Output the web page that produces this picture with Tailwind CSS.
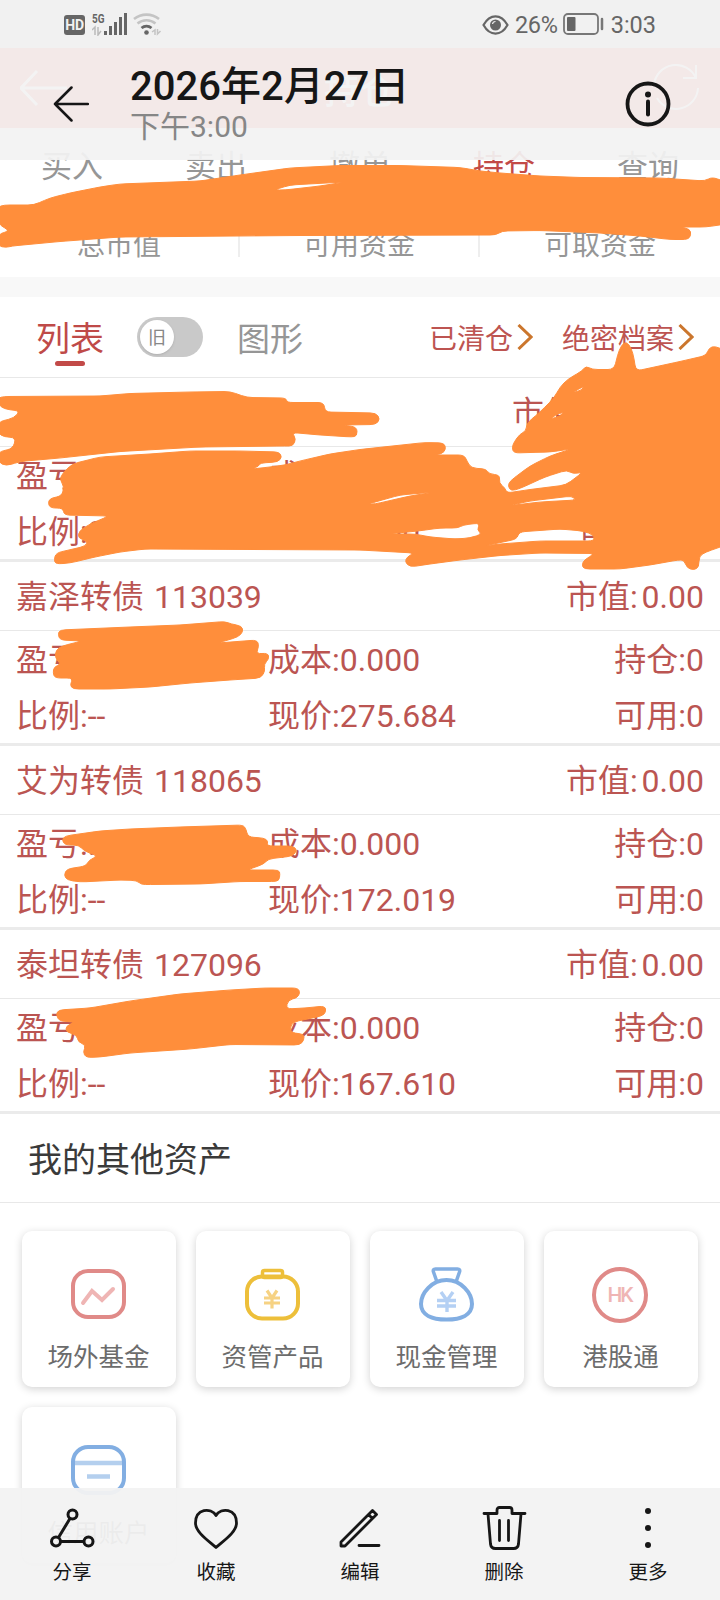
<!DOCTYPE html>
<html lang="zh-CN">
    <head>
        <meta charset="UTF-8" />
        <meta name="viewport" content="width=device-width, initial-scale=1.0" />
        <script src="https://cdn.jsdelivr.net/npm/@tailwindcss/browser@4"></script>
        <title>持仓</title>
    </head>
    <body
        class="relative h-[1600px] w-[720px] overflow-hidden bg-white font-[Roboto,'Noto_Sans_CJK_SC',sans-serif] leading-none"
    >
        <!-- trading app -->
        <main class="flex h-full flex-col">
            <div class="h-12 shrink-0 bg-[#e4e4e4]"></div>
            <div
                class="flex h-20 shrink-0 items-center justify-between bg-[#ff6c60] pl-5 pr-5 text-white"
            >
                <svg class="h-10 w-12" viewBox="0 0 48 40" fill="none" stroke="currentColor" stroke-width="3">
                    <path d="M17 3 1 20l16 17M1 20h46" />
                </svg>
                <span class="pt-2 text-[36px] font-medium">持仓</span>
                <svg class="h-12 w-12" viewBox="0 0 48 48" fill="none" stroke="currentColor" stroke-width="2">
                    <path d="M2 21A22 22 0 0 1 44 14M46 24A22 22 0 0 1 5 34M44 1v13H31" />
                </svg>
            </div>

            <nav
                class="grid h-[74px] shrink-0 grid-cols-5 items-center pt-[3px] text-center text-[31px] text-[#969696]"
            >
                <span>买入</span>
                <span>卖出</span>
                <span>撤单</span>
                <span class="text-[#c24a47]">持仓</span>
                <span>查询</span>
            </nav>

            <div
                class="grid h-[75px] shrink-0 grid-cols-3 items-end pb-[20px] text-center text-[28px] leading-[22px] text-[#969696]"
            >
                <span class="border-r-2 border-[#eee]">总市值</span>
                <span class="border-r-2 border-[#eee]">可用资金</span>
                <span>可取资金</span>
            </div>
            <div class="h-5 shrink-0 bg-[#f8f8f8]"></div>

            <div
                class="flex h-[81px] shrink-0 items-center border-b border-[#e8e8e8] pl-9 pr-[26px] text-[#bd5451]"
            >
                <div class="relative pt-1 text-[34px] text-[#bf4a48]">
                    列表
                    <i class="absolute -bottom-[10px] left-[19px] h-[5px] w-[30px] rounded-full bg-[#c24a48]"></i>
                </div>
                <div class="ml-[33px] flex h-10 w-[66px] items-center rounded-full bg-[#c9c9c9] pl-[3px]">
                    <span
                        class="flex size-[34px] items-center justify-center rounded-full bg-white pt-0.5 text-[18px] text-[#888] shadow"
                        >旧</span
                    >
                </div>
                <span class="ml-[34px] pt-1 text-[33px] text-[#969696]">图形</span>
                <div class="ml-auto flex items-center text-[28px]">
                    <span class="pt-[5px]">已清仓</span>
                    <svg class="ml-1 h-[26px] w-4" viewBox="0 0 16 26" fill="none" stroke="#cb762d" stroke-width="3">
                        <path d="m1.500 1 12.500 12-12.500 12" />
                    </svg>
                </div>
                <div class="ml-[29px] flex items-center text-[28px]">
                    <span class="pt-[5px]">绝密档案</span>
                    <svg class="ml-1 h-[26px] w-4" viewBox="0 0 16 26" fill="none" stroke="#cb762d" stroke-width="3">
                        <path d="m1.500 1 12.500 12-12.500 12" />
                    </svg>
                </div>
            </div>

            <!-- positions -->
            <section class="shrink-0 text-[32px] text-[#bb5552]">
                <article class="h-[184px] border-b-[3px] border-[#ebebeb]">
                    <header class="flex h-[69px] items-center border-b border-[#e8e8e8] px-4 pt-0.5">
                        <span class="ml-auto [word-spacing:-4px]">市值: 0000.00</span>
                    </header>
                    <div class="grid h-[113px] grid-cols-[252px_1fr_auto] items-center px-4 pt-px">
                        <span>盈亏:</span><span>成本:0.000</span><span class="text-right">持仓:000</span>
                        <span>比例:3</span><span>现价:0.000</span><span class="text-right">可用:000</span>
                    </div>
                </article>
                <article class="h-[184px] border-b-[3px] border-[#ebebeb]">
                    <header class="flex h-[69px] items-center justify-between border-b border-[#e8e8e8] px-4 pt-0.5">
                        <span class="[word-spacing:2px]">嘉泽转债 113039</span>
                        <span class="[word-spacing:-4px]">市值: 0.00</span>
                    </header>
                    <div class="grid h-[113px] grid-cols-[252px_1fr_auto] items-center px-4 pt-px">
                        <span>盈亏:</span><span>成本:0.000</span><span class="text-right">持仓:0</span>
                        <span>比例:--</span><span>现价:275.684</span><span class="text-right">可用:0</span>
                    </div>
                </article>
                <article class="h-[184px] border-b-[3px] border-[#ebebeb]">
                    <header class="flex h-[69px] items-center justify-between border-b border-[#e8e8e8] px-4 pt-0.5">
                        <span class="[word-spacing:2px]">艾为转债 118065</span>
                        <span class="[word-spacing:-4px]">市值: 0.00</span>
                    </header>
                    <div class="grid h-[113px] grid-cols-[252px_1fr_auto] items-center px-4 pt-px">
                        <span>盈亏:.</span><span>成本:0.000</span><span class="text-right">持仓:0</span>
                        <span>比例:--</span><span>现价:172.019</span><span class="text-right">可用:0</span>
                    </div>
                </article>
                <article class="h-[184px] border-b-[3px] border-[#ebebeb]">
                    <header class="flex h-[69px] items-center justify-between border-b border-[#e8e8e8] px-4 pt-0.5">
                        <span class="[word-spacing:2px]">泰坦转债 127096</span>
                        <span class="[word-spacing:-4px]">市值: 0.00</span>
                    </header>
                    <div class="grid h-[113px] grid-cols-[252px_1fr_auto] items-center px-4 pt-px">
                        <span>盈亏:</span><span>成本:0.000</span><span class="text-right">持仓:0</span>
                        <span>比例:--</span><span>现价:167.610</span><span class="text-right">可用:0</span>
                    </div>
                </article>
            </section>

            <h2 class="flex h-[89px] shrink-0 items-center border-b border-[#e8e8e8] pl-7 pt-1 text-[34px] text-[#3a3a3a]">
                我的其他资产
            </h2>

            <!-- other assets -->
            <section
                class="grid shrink-0 grid-cols-[repeat(4,154px)] gap-5 px-[22px] pt-7 text-[25.5px] text-[#6c6c6c]"
            >
                <div class="flex h-[156px] flex-col items-center rounded-[10px] bg-white pt-[34px] shadow-[0_2px_8px_rgba(0,0,0,0.18)]">
                    <svg class="mr-px h-[60px] w-[60px]" viewBox="0 0 60 60" fill="none">
                        <rect x="4" y="6" width="51" height="46" rx="15" stroke="#e08a88" stroke-width="4" />
                        <path d="m14 38 9-12 10 9 11-11" stroke="#efb5b4" stroke-width="4" stroke-linecap="round" />
                    </svg>
                    <span class="mt-[20px] pr-px">场外基金</span>
                </div>
                <div class="flex h-[156px] flex-col items-center rounded-[10px] bg-white pt-[34px] shadow-[0_2px_8px_rgba(0,0,0,0.18)]">
                    <svg class="mr-px h-[60px] w-[60px]" viewBox="0 0 60 60" fill="none" stroke="#edbf3a">
                        <rect x="4" y="11.500" width="51" height="42" rx="15" stroke-width="4" />
                        <rect x="19.500" y="5.500" width="20" height="7" rx="2" stroke-width="3.500" />
                        <path d="m24 25.500 5 7.500 5-7.500M29 33v10.500M21 33h16M21 38h16" stroke="#f6d283" stroke-width="3.200" />
                    </svg>
                    <span class="mt-[20px] pr-px">资管产品</span>
                </div>
                <div class="flex h-[156px] flex-col items-center rounded-[10px] bg-white pt-[34px] shadow-[0_2px_8px_rgba(0,0,0,0.18)]">
                    <svg class="mr-px h-[60px] w-[60px]" viewBox="0 0 60 60" fill="none" stroke="#82aee2">
                        <path d="M29.500 15C15 15 4 28 4 39c0 11 11 15.500 25.500 15.500S55 50 55 39C55 28 44 15 29.500 15Z" stroke-width="4" />
                        <path d="M20 17 16.500 7q-1-3 2-3h22q3 0 2 3l-3.500 10" stroke-width="3.500" />
                        <path d="m24 27 6 8.500 6-8.500M30 35.500V47M20 35.500h19M20 41h19" stroke="#b4d0f4" stroke-width="3.400" />
                    </svg>
                    <span class="mt-[20px] pr-px">现金管理</span>
                </div>
                <div class="flex h-[156px] flex-col items-center rounded-[10px] bg-white pt-[34px] shadow-[0_2px_8px_rgba(0,0,0,0.18)]">
                    <div class="flex size-[60px] items-center justify-center pr-0.5">
                        <span
                            class="flex size-[56px] items-center justify-center rounded-full border-4 border-[#e08a88] pr-px pt-px text-[21px] font-medium tracking-[-2px] text-[#efb5b4]"
                            >HK</span
                        >
                    </div>
                    <span class="mt-[20px] pr-px">港股通</span>
                </div>
                <div class="flex h-[156px] flex-col items-center rounded-[10px] bg-white pt-[34px] shadow-[0_2px_8px_rgba(0,0,0,0.18)]">
                    <svg class="mr-px h-[60px] w-[60px]" viewBox="0 0 60 60" fill="none">
                        <path d="M6 22h48M18 35.500h23" stroke="#b4cfee" stroke-width="4.500" />
                        <rect x="4" y="6" width="51" height="46" rx="15" stroke="#82aee2" stroke-width="4" />
                    </svg>
                    <span class="mt-[20px] pr-px">信用账户</span>
                </div>
            </section>
        </main>

        <!-- marker strokes -->
        <svg
            id="marker"
            class="absolute inset-0 h-[1600px] w-[720px]"
            viewBox="0 0 720 1600"
            fill="#ff8e3b"
            fill-rule="evenodd"
            stroke="#ff8e3b"
            stroke-linejoin="round"
        ></svg>

        <!-- gallery top bar -->
        <div class="absolute inset-x-0 top-0 h-40 bg-[#f2f2f2]/93">
            <div class="flex h-12 items-center pl-16 pr-[64px] pt-0.5 text-[23.5px] text-[#666]">
                <span
                    class="flex h-5 w-[21px] items-center justify-center rounded-[3px] bg-[#666] text-[14px] font-bold tracking-tight text-[#f1f1f1]"
                    >HD</span
                >
                <svg class="-mt-0.5 ml-[7px] h-6 w-[70px]" viewBox="0 0 70 24" fill="none">
                    <text x="0" y="10.500" font-family="Roboto" font-size="13" font-weight="700" fill="#666" textLength="12.500" lengthAdjust="spacingAndGlyphs">5G</text>
                    <path d="m0 18 3-3v8M6 15v8l3-4" stroke="#bbb" stroke-width="1.500" />
                    <path d="M13.500 19v4M18.500 14v9M23.500 10v13M28.500 5v18M33.500 1v22" stroke="#666" stroke-width="3" />
                    <path d="M42 7a20 20 0 0 1 25 0M45.500 11.500a14 14 0 0 1 18 0" stroke="#c4c4c4" stroke-width="2.600" />
                    <path d="M49.500 16a8 8 0 0 1 10 0" stroke="#666" stroke-width="2.800" />
                    <circle cx="54.500" cy="20.500" r="2.300" fill="#666" />
                    <path d="m60 20 3-2v5M65.500 17v5l3-3" stroke="#c4c4c4" stroke-width="1.500" />
                </svg>
                <svg class="ml-auto h-5 w-[27px]" viewBox="0 0 27 20" fill="none">
                    <path d="M1.500 10C8-1.500 19-1.500 25.500 10 19 21.500 8 21.500 1.500 10Z" stroke="#666" stroke-width="2.200" />
                    <circle cx="13.500" cy="10" r="5.500" fill="#666" />
                    <path d="M10.500 9a3 3 0 0 1 3-2.500" stroke="#f1f1f1" stroke-width="1.200" />
                </svg>
                <span class="ml-[6px] pt-0.5 tracking-[-0.3px]">26%</span>
                <svg class="-mt-0.5 ml-[5px] h-[22px] w-[41px]" viewBox="0 0 41 22" fill="none">
                    <rect x="1" y="1" width="34" height="20" rx="4" stroke="#777" stroke-width="1.800" />
                    <rect x="4" y="4" width="8.500" height="14" rx="1" fill="#666" />
                    <path d="M39 6v10" stroke="#777" stroke-width="2.500" stroke-linecap="round" />
                </svg>
                <span class="ml-[7px] pt-0.5">3:03</span>
            </div>
            <div class="flex h-28 items-center pl-[53px] pr-[49px] text-[#161616]">
                <svg class="h-9 w-9" viewBox="0 0 36 36" fill="none" stroke="currentColor" stroke-width="2.500" stroke-linecap="round" stroke-linejoin="round">
                    <path d="M18.500 1.500 2 18l16.500 16.500M2 18h33" />
                </svg>
                <div class="ml-[41px]">
                    <h1 class="text-[40px] font-medium">2026年2月27日</h1>
                    <p class="mt-[5px] text-[30px] text-[#868686]">下午3:00</p>
                </div>
                <svg class="ml-auto h-[46px] w-[46px]" viewBox="0 0 46 46" fill="none" stroke="currentColor" stroke-linecap="round">
                    <circle cx="23" cy="23" r="20.500" stroke-width="3.800" />
                    <circle cx="23" cy="13.500" r="3" fill="currentColor" stroke="none" />
                    <path d="M23 20.500v13" stroke-width="4" />
                </svg>
            </div>
        </div>

        <!-- gallery action bar -->
        <div
            class="absolute inset-x-0 bottom-0 grid h-28 grid-cols-5 bg-[#f2f2f2]/95 pt-[17px] text-center text-[19.5px] text-[#161616]"
        >
            <div class="flex flex-col items-center gap-[10px]">
                <svg class="size-12" viewBox="0 0 48 48" fill="none" stroke="currentColor" stroke-width="3">
                    <circle cx="24.500" cy="9.500" r="4.500" />
                    <circle cx="8" cy="36.500" r="4.500" />
                    <circle cx="40.500" cy="36.500" r="4.500" />
                    <path d="M22 13.500 10.500 32.500M13 36.500h22.500" />
                </svg>
                <span>分享</span>
            </div>
            <div class="flex flex-col items-center gap-[10px]">
                <svg class="size-12" viewBox="0 0 48 48" fill="none" stroke="currentColor" stroke-width="2.800" stroke-linejoin="round">
                    <path d="M24 10.500C19 2 3.500 3.500 3.500 18c0 9 12 17 20.500 24.500C32.500 35 44.500 27 44.500 18 44.500 3.500 29 2 24 10.500Z" />
                </svg>
                <span>收藏</span>
            </div>
            <div class="flex flex-col items-center gap-[10px]">
                <svg class="size-12" viewBox="0 0 48 48" fill="none" stroke="currentColor" stroke-width="2.800" stroke-linejoin="round" stroke-linecap="round">
                    <path d="M5 41v-4L36.500 5.500l4 4L9 41ZM32.500 9.500l4 4M23 40.500h20" />
                </svg>
                <span>编辑</span>
            </div>
            <div class="flex flex-col items-center gap-[10px]">
                <svg class="size-12" viewBox="0 0 48 48" fill="none" stroke="currentColor" stroke-width="2.800" stroke-linejoin="round" stroke-linecap="round">
                    <path d="M4 8.500h13V5q0-2.500 2.500-2.500h10Q32 2.500 32 5v3.500h13M8 9l2.500 30q.5 4.500 5 4.500h18q4.500 0 5-4.500L41 9M19.500 15.500v20M28.500 15.500v20" />
                </svg>
                <span>删除</span>
            </div>
            <div class="flex flex-col items-center gap-[10px]">
                <svg class="size-12" viewBox="0 0 48 48" fill="currentColor">
                    <circle cx="24" cy="6" r="3" />
                    <circle cx="24" cy="23" r="3" />
                    <circle cx="24" cy="40" r="3" />
                </svg>
                <span>更多</span>
            </div>
        </div>

        <script>
            // every scribble is a list of outlines: the blob first, then its gaps
            const scribbles = [
                [
                    "4 205 34 205 50 198 70 193 100 187 120 184 160 182.5 200 181 240 175 290 168 340 165.5 400 165.5 460 167.5 480 171 500 173 540 176 580 177.5 660 178 705 181 712 177 726 182 726 224 706 227 680 227 690 229 691 235 688 239.5 670 239.5 640 236 600 233 540 230.5 502 231 496 235 300 235.5 120 237 60 241.5 12 246 6 247.5 -2 246 -2 234 10 231 -2 224 -2 207",
                    "274 190 290 185 345 182 320 186 285 190",
                ],
                [
                    "4 396.5 100 396 130 393.5 190 392 230 391.5 247 397.5 286 398 287 402.5 324 402.5 325 412 376 413 380 419 376 424.5 342 425 357 427 357 436 352 437 320 435 292 432.5 296 439 293 446 285 446 200 447 120 451.5 60 458 20 461.5 6 466 -2 462 -2 452 13 448.5 16 437.5 4 437 -2 433 -2 422 14 418 20 411 4 409 -2 404 -2 398",
                ],
                [
                    "62 474 72 464 100 457 150 454 190 451 240 451 279 452 282 457 278 462 260 463 259 466 252 469 270 467 285 465 300 461 330 454 360 449.5 425 442.5 444 443 446 449 442 454 432 455 464 455 467 461 471 468 486 469 489 474 500 475 499 483 505 488 507 493 530 489.5 566 485 583 472 573 474 567 470 545 477 520 488.5 511 491 508 486 510 481 530 466 550 456 571 449 550 452 530 452.5 514 453 512 448 514 442 520 434 526 431 527 423 540 412 554 398 560 387 568 379 582 371 586 366 592 369.5 614 369.5 619 350 624 342 629 344 633 353 636 371 680 361.5 706 355.5 709 348 715 346 726 351 726 545 706 552 699 556 699 567 694 570 687 568 684 560 678 560 650 565 620 569 584 569 582 565 584 560 595 553.5 540 553 500 555.5 460 560 430 564 410 567 405 562 407 557 414 553 360 550 145 549 120 552 95 557 70 563 56 564 54 560 56 553 86 546 87 541 78 538 79 531 90 524 109 516 64 515 63 508 50 508 48 502 51 498 62 496 64 486 60 480",
                    "387 534 418 531 440 528 458 528 463 525 480 523 477 530 482 534 470 538 455 539 430 537 415 534",
                    "484 546 517 539 519 532 560 529 583 531 594 535 594 541 540 541 500 544",
                    "368 504 400 495 435 492 410 496 375 504",
                    "512 505 530 501 572 496 576 500 540 502 515 505",
                    "572 393 584 386 582 390",
                    "551 419 555 415 564 412 560 416",
                ],
                [
                    "60 630 130 627 180 625 225 621.5 231 624 242 626 243 632 238 637 218 643 257 640 259 646 256 654 268 653 269 659 264 664 265 671 261 678 230 680 190 683 150 687 110 689 73 689 70 685 73 678 55 678 53 673 54 667 61 664 55 658 56 650 62 646 82 641 60 640 58 634",
                ],
                [
                    "65 836 100 831 130 829 180 827 243 825 246 829 248 837 264 838 268 841 267 846 293 846 297 850 293 856 268 859 264 864 247 870 279 870 280 874 279 881 272 881.5 240 881.5 200 884 150 884.5 141 884.5 137 880.5 120 880 80 882 67 880 64 875 67 869 86 866 89 860 98 856 84 851 79 845 65 845 62 840",
                ],
                [
                    "59 1010 90 1008 130 1001 180 994 230 990 265 988 298 988 300 993 297 998 288 1000 286 1009 305 1008 325 1006 326 1012 322 1016 293 1022 290 1028 292 1033 304 1034 304 1040 300 1045 230 1044.5 190 1049 130 1053 100 1057 86 1057.5 83 1052 86 1045 78 1042 77 1035 66 1032 66 1026 75 1022 59 1021 56 1014",
                ],
            ];

            // cut each corner back a little and bridge it with a curve
            function outline(list) {
                const n = list.split(" ").map(Number);
                const pts = [];
                for (let i = 0; i < n.length; i += 2) pts.push([n[i], n[i + 1]]);
                let d = "";
                pts.forEach((p, i) => {
                    const toward = (q) => {
                        const len = Math.hypot(q[0] - p[0], q[1] - p[1]);
                        const t = Math.min(0.5, 6 / len);
                        return [p[0] + (q[0] - p[0]) * t, p[1] + (q[1] - p[1]) * t];
                    };
                    const a = toward(pts[(i + pts.length - 1) % pts.length]);
                    const b = toward(pts[(i + 1) % pts.length]);
                    d += (i ? "L" : "M") + a + "Q" + p + " " + b;
                });
                return d + "Z";
            }

            const marker = document.getElementById("marker");
            scribbles.forEach((shape) => {
                const path = document.createElementNS("http://www.w3.org/2000/svg", "path");
                path.setAttribute("d", shape.map(outline).join(""));
                marker.appendChild(path);
            });
        </script>
    </body>
</html>
